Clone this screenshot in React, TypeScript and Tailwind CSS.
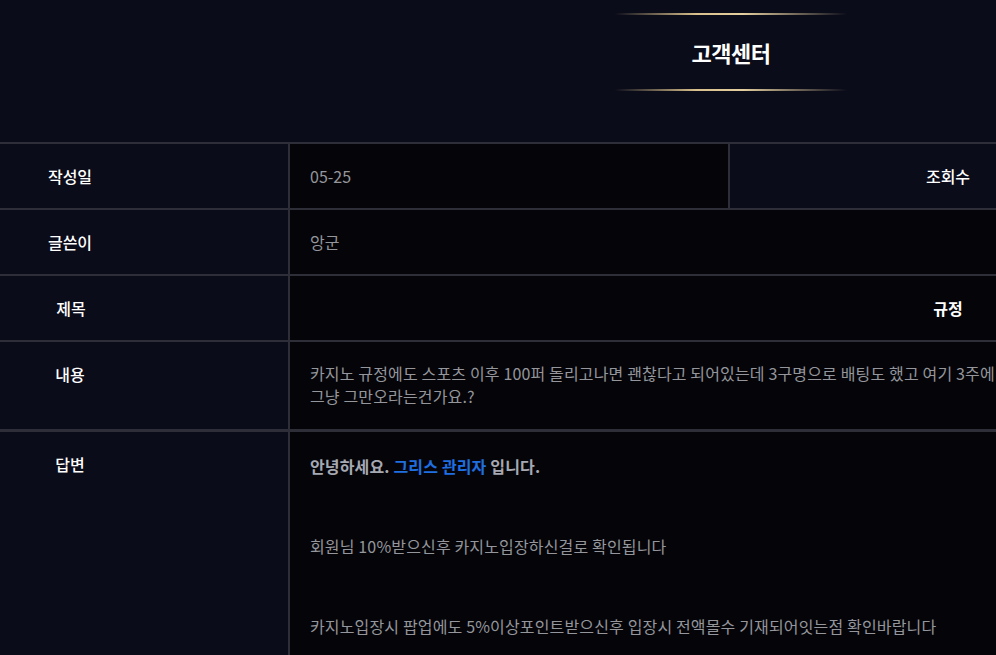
const FONT = { fontFamily: '"Noto Sans CJK KR", "Noto Sans", sans-serif' };

function GoldLine() {
  return (
    <div className="h-[2px] w-[232px] bg-[linear-gradient(90deg,rgba(216,190,138,0)_0%,#d9c08c_35%,#e4cf9f_55%,rgba(216,190,138,0)_100%)]" />
  );
}

function Label({ children, top = false }: { children: React.ReactNode; top?: boolean }) {
  return (
    <div
      className={`w-[288px] shrink-0 bg-[#0b0c1a] text-[16px] font-medium text-white ${
        top ? 'pt-[20px]' : 'flex items-center'
      }`}
    >
      <div className="w-[140px] text-center leading-[24px]">{children}</div>
    </div>
  );
}

export default function App() {
  return (
    <div className="w-full h-[655px] overflow-hidden bg-[#0b0c1a]" style={FONT}>
      <div className="w-[1462px]">
        {/* Title */}
        <div className="h-[142px] flex flex-col items-center pt-[13px]">
          <GoldLine />
          <div className="h-[74px] flex items-center text-[22px] font-bold text-white tracking-[-0.5px]">
            고객센터
          </div>
          <GoldLine />
        </div>

        {/* Table */}
        <div className="border-t-2 border-[#2d2e37]">
          <div className="flex h-[66px] border-b-2 border-[#2d2e37]">
            <Label>작성일</Label>
            <div className="w-[440px] shrink-0 border-l-2 border-[#2d2e37] bg-[#050509] flex items-center pl-[20px] text-[16px] text-[#94969c]">
              05-25
            </div>
            <div className="w-[438px] shrink-0 border-l-2 border-[#2d2e37] bg-[#0b0c1a] flex items-center justify-center text-[16px] font-medium text-white">
              조회수
            </div>
            <div className="flex-1 border-l-2 border-[#2d2e37] bg-[#050509]" />
          </div>

          <div className="flex h-[66px] border-b-2 border-[#2d2e37]">
            <Label>글쓴이</Label>
            <div className="flex-1 border-l-2 border-[#2d2e37] bg-[#050509] flex items-center pl-[20px] text-[16px] text-[#94969c]">
              앙군
            </div>
          </div>

          <div className="flex h-[66px] border-b-2 border-[#2d2e37]">
            <Label>
              <span className="pl-[2px]">제목</span>
            </Label>
            <div className="flex-1 border-l-2 border-[#2d2e37] bg-[#050509] flex items-center">
              <div className="w-[1316px] text-center text-[16px] font-bold text-white">규정</div>
            </div>
          </div>

          <div className="flex h-[90px] border-b-[3px] border-[#2d2e37]">
            <Label top>내용</Label>
            <div className="flex-1 border-l-2 border-[#2d2e37] bg-[#050509] pl-[20px] pt-[20px] text-[16px] leading-[23px] tracking-[0.15px] text-[#94969c] whitespace-nowrap">
              카지노 규정에도 스포츠 이후 100퍼 돌리고나면 괜찮다고 되어있는데 3구명으로 배팅도 했고 여기 3주에
              <br />
              그냥 그만오라는건가요.?
            </div>
          </div>

          <div className="flex h-[240px]">
            <Label top>답변</Label>
            <div className="flex-1 border-l-2 border-[#2d2e37] bg-[#050509] pl-[20px] pt-[22px] text-[16px] tracking-[0.15px] text-[#94969c] whitespace-nowrap">
              <div className="leading-[24px] font-bold text-[#a6a9b2]">
                안녕하세요. <span className="text-[#1f6fe0]">그리스 관리자</span> 입니다.
              </div>
              <div className="mt-[56px] leading-[24px]">회원님 10%받으신후 카지노입장하신걸로 확인됩니다</div>
              <div className="mt-[56px] leading-[24px]">
                카지노입장시 팝업에도 5%이상포인트받으신후 입장시 전액몰수 기재되어잇는점 확인바랍니다
              </div>
            </div>
          </div>
        </div>
      </div>
    </div>
  );
}
